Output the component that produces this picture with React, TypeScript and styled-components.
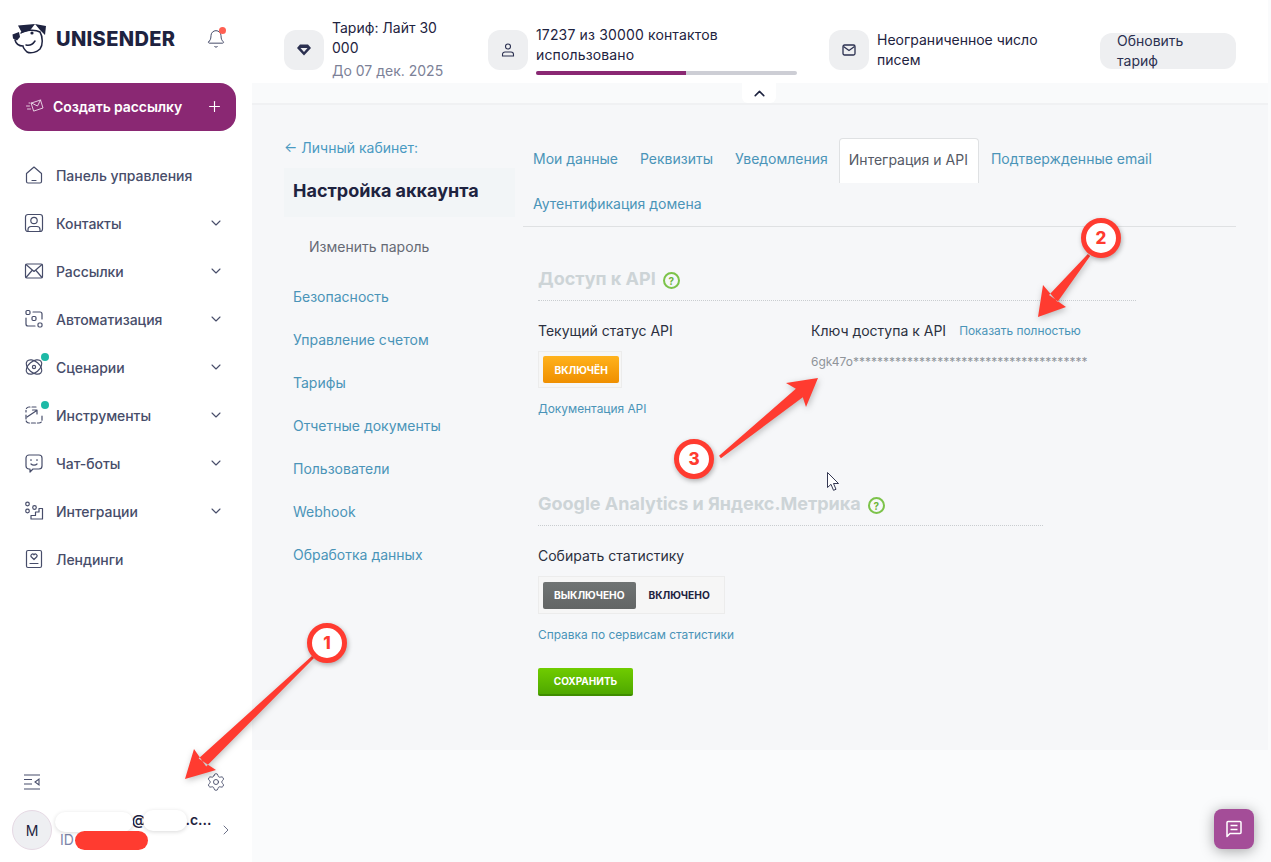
import React from "react";
import styled, { createGlobalStyle } from "styled-components";
import { Bell, ChevronDown, ChevronRight, ChevronUp, Plus, Settings } from "lucide-react";

const GlobalStyle = createGlobalStyle`
  html, body {
    margin: 0;
    padding: 0;
    background: #fff;
    overflow: hidden;
  }
  * {
    box-sizing: border-box;
  }
  body {
    font-family: Inter, "Noto Sans", sans-serif;
    font-size: 14px;
    color: #1e2340;
  }
`;

const Page = styled.div`
  position: relative;
  display: flex;
  width: 100%;
  height: 100vh;
  overflow: hidden;
`;

const Sidebar = styled.aside`
  display: flex;
  flex-direction: column;
  flex: 0 0 252px;
  background: #fff;
`;

const LogoRow = styled.div`
  display: flex;
  align-items: center;
  height: 38px;
  margin: 20px 0 25px;
  padding: 0 26px 0 11px;
`;

const LogoText = styled.span`
  margin-left: 9px;
  font-size: 20px;
  font-weight: 800;
  letter-spacing: 0.35px;
  color: #1e2340;
`;

const BellWrap = styled.div`
  position: relative;
  display: flex;
  margin-left: auto;
  color: #474d6a;

  &::after {
    content: "";
    position: absolute;
    top: -2px;
    right: 0;
    width: 7px;
    height: 7px;
    border-radius: 50%;
    background: #ff5f52;
  }
`;

const CreateButton = styled.button`
  display: flex;
  align-items: center;
  width: 224px;
  height: 48px;
  margin-left: 12px;
  padding: 0 13px 2px 14px;
  border: 0;
  border-radius: 16px;
  background: #8a2873;
  color: #fff;
  font: 600 14px Inter, sans-serif;
  letter-spacing: -0.1px;

  svg:last-child {
    margin-left: auto;
  }
`;

const CreateLabel = styled.span`
  margin-left: 9px;
`;

const Nav = styled.nav`
  display: flex;
  flex-direction: column;
  padding-top: 20px;
`;

const NavItem = styled.a`
  display: flex;
  align-items: center;
  height: 48px;
  padding: 0 28px 0 22px;
  color: #474d6a;
  font-weight: 500;
  letter-spacing: -0.05px;

  > svg:last-child {
    margin-left: auto;
  }
`;

const NavIcon = styled.span<{ $dot?: boolean }>`
  position: relative;
  display: flex;
  width: 24px;
  height: 24px;
  margin-right: 10px;

  &::after {
    content: "";
    display: ${({ $dot }) => ($dot ? "block" : "none")};
    position: absolute;
    top: -2px;
    right: -3px;
    width: 8px;
    height: 8px;
    border-radius: 50%;
    background: #1db9a6;
  }
`;

const SidebarBottom = styled.div`
  margin-top: auto;
  padding-bottom: 12px;
`;

const ToolsRow = styled.div`
  display: flex;
  align-items: center;
  justify-content: space-between;
  height: 24px;
  margin-bottom: 16px;
  padding: 0 26px 0 23px;
  color: #474d6a;
`;

const UserRow = styled.div`
  display: flex;
  align-items: center;
  height: 40px;
  padding: 0 18px 0 12px;
  color: #474d6a;
`;

const Avatar = styled.div`
  display: flex;
  align-items: center;
  justify-content: center;
  flex: 0 0 40px;
  height: 40px;
  border: 1px solid #e6d9e4;
  border-radius: 50%;
  background: #eeeff2;
  color: #1e2340;
`;

const UserInfo = styled.div`
  width: 144px;
  margin: 0 auto 0 8px;
  line-height: 20px;
`;

const UserEmail = styled.div`
  color: #1e2340;
  font-weight: 600;
  white-space: nowrap;
`;

const UserId = styled.div`
  color: #7c86a8;
`;

const Main = styled.main`
  display: flex;
  flex-direction: column;
  flex: 1;
  min-width: 0;
  padding-right: 3px;
  background: #fafbfc;
`;

const TopBar = styled.header`
  display: flex;
  flex: 0 0 83px;
  align-items: flex-start;
  padding: 20px 32px 0;
  background: #fff;
`;

const TopItem = styled.div<{ $width: number }>`
  display: flex;
  align-items: flex-start;
  flex: 0 0 ${({ $width }) => $width}px;
  gap: 8px;
`;

const IconTile = styled.div`
  display: flex;
  align-items: center;
  justify-content: center;
  flex: 0 0 40px;
  height: 40px;
  margin-top: 10px;
  border-radius: 12px;
  background: #eeeff1;
  color: #2b3050;
`;

const TopText = styled.div<{ $width: number; $offset?: number; $spacing?: number }>`
  width: ${({ $width }) => $width}px;
  margin-top: ${({ $offset }) => $offset ?? 0}px;
  line-height: 20px;
  letter-spacing: ${({ $spacing }) => $spacing ?? 0}px;
  color: #1e2340;
`;

const TopMuted = styled.div`
  margin-top: 3px;
  color: #7c8197;
`;

const Progress = styled.div`
  height: 4px;
  margin-top: 6px;
  border-radius: 2px;
  background: #cdced5;
  overflow: hidden;
`;

const ProgressFill = styled.div`
  height: 100%;
  background: #8a2873;
`;

const UpgradeButton = styled.div`
  flex: 0 0 136px;
  height: 36px;
  margin-top: 13px;
  padding: 0 32px 0 17px;
  border-radius: 12px;
  background: #eeeff1;
  color: #2b3050;
  line-height: 20px;
  overflow: hidden;
`;

const UpgradeLabel = styled.div`
  margin-top: -2px;
`;

const Strip = styled.div`
  display: flex;
  flex: 0 0 22px;
  justify-content: flex-start;
  padding-left: 490px;
  border-bottom: 2px solid #f0f1f3;
  background: #f9fafb;
`;

const CollapseTab = styled.div`
  display: flex;
  align-items: center;
  justify-content: center;
  width: 34px;
  height: 20px;
  border-radius: 0 0 6px 6px;
  background: #fff;
  color: #1e2340;
`;

const Content = styled.div`
  display: flex;
  flex: 0 0 645px;
  gap: 8px;
  padding: 33px 32px 0;
  background: #f6f7f9;
`;

const LeftColumn = styled.div`
  flex: 0 0 231px;
`;

const BackLink = styled.a`
  display: block;
  margin: 0 0 10px;
  color: #4a9ac2;
  font-size: 14px;
  line-height: 20px;
`;

const PageTitle = styled.div`
  height: 49px;
  padding-left: 9px;
  background: #f2f5f7;
  color: #1e2340;
  font-size: 18px;
  font-weight: 700;
  line-height: 46px;
`;

const SubItem = styled.div`
  height: 58px;
  padding-left: 25px;
  color: #666a75;
  line-height: 60px;
`;

const SideLink = styled.a`
  display: block;
  height: 43px;
  padding-left: 9px;
  color: #4a94b8;
  line-height: 43px;
`;

const RightColumn = styled.div`
  flex: 1;
  min-width: 0;
`;

const TabBar = styled.div`
  display: flex;
  flex-wrap: wrap;
  align-content: flex-start;
  gap: 0 2px;
  height: 89px;
  border-bottom: 1px solid #dfe1e3;
`;

const Tab = styled.a<{ $active?: boolean }>`
  height: 45px;
  margin-left: ${({ $active }) => ($active ? -1 : 0)}px;
  padding: 0 ${({ $active }) => ($active ? "10px 0 9px" : "10px")};
  border: ${({ $active }) => ($active ? "1px solid #dfe1e3" : "0")};
  border-bottom: 0;
  border-radius: 4px 4px 0 0;
  background: ${({ $active }) => ($active ? "#fff" : "transparent")};
  color: ${({ $active }) => ($active ? "#555a66" : "#4a94b8")};
  line-height: ${({ $active }) => ($active ? 41 : 42)}px;
`;

const Section = styled.section<{ $width: number; $top: number }>`
  width: ${({ $width }) => $width}px;
  margin: ${({ $top }) => $top}px 0 0 15px;
`;

const SectionHead = styled.div`
  display: flex;
  align-items: center;
  gap: 7px;
  height: 37px;
  padding-bottom: 6px;
  border-bottom: 1px dotted #c9cdd0;
`;

const SectionTitle = styled.h2`
  margin: 0;
  color: #cdd4d7;
  font-size: 18px;
  font-weight: 700;
  line-height: 30px;
`;

const HelpMark = styled.span`
  display: flex;
  align-items: center;
  justify-content: center;
  width: 17px;
  height: 17px;
  margin-top: 3px;
  border: 2px solid #7cc34a;
  border-radius: 50%;
  color: #6cb53a;
  font-size: 10px;
  font-weight: 700;
`;

const ApiGrid = styled.div`
  display: grid;
  grid-template-columns: 273px 1fr;
  margin-top: 20px;
`;

const FieldLabel = styled.div`
  color: #2b3040;
  line-height: 20px;
`;

const KeyHead = styled.div`
  display: flex;
  align-items: center;
  gap: 13px;
`;

const SmallLink = styled.a`
  color: #4a94b8;
  font-size: 11.9px;
  line-height: 16px;
`;

const HelpLink = styled(SmallLink)`
  display: block;
  margin-top: 13px;
`;

const ApiKey = styled.div`
  margin-top: 13px;
  color: #8f9499;
  font-size: 12px;
  line-height: 16px;
  white-space: nowrap;
`;

const ToggleBox = styled.div<{ $height: number }>`
  display: inline-flex;
  align-items: center;
  height: ${({ $height }) => $height}px;
  margin-top: 10px;
  padding: 0 2px 0 4px;
  border: 1px solid #ececec;
  background: #f6f6f6;
  vertical-align: top;
`;

const ToggleOption = styled.span<{ $tone?: "orange" | "grey" }>`
  display: flex;
  align-items: center;
  justify-content: center;
  height: 27px;
  padding: ${({ $tone }) => ($tone === "grey" ? "0 11px" : $tone === "orange" ? "0 11.5px" : "0 12px 0 13px")};
  border-radius: 2px;
  background: ${({ $tone }) =>
    $tone === "orange"
      ? "linear-gradient(#ffb21c, #ef8f00)"
      : $tone === "grey"
        ? "linear-gradient(#707474, #626565)"
        : "transparent"};
  color: ${({ $tone }) => ($tone ? "#fff" : "#1e2340")};
  font-size: 10.2px;
  font-weight: 700;
`;

const ToggleRow = styled.div`
  line-height: 0;
`;

const SaveButton = styled.button`
  display: block;
  width: 95px;
  height: 28px;
  margin-top: 25px;
  padding: 0;
  border: 0;
  border-bottom: 2px solid #3f8c00;
  border-radius: 2px;
  background: linear-gradient(#70cc00, #4fa800);
  color: #fff;
  font: 700 10px Inter, sans-serif;
`;

const ChatButton = styled.div`
  position: absolute;
  top: 809px;
  left: 1214px;
  display: flex;
  align-items: center;
  justify-content: center;
  width: 40px;
  height: 40px;
  border-radius: 8px;
  background: #a44d98;
  box-shadow: 0 2px 14px rgba(0, 0, 0, 0.35);
  color: #fff;
`;

const Overlay = styled.svg`
  position: absolute;
  top: 0;
  left: 0;
  filter: drop-shadow(1px 2px 3px rgba(0, 0, 0, 0.25));
  pointer-events: none;
`;

const Marker = styled.div<{ $x: number; $y: number }>`
  position: absolute;
  top: ${({ $y }) => $y - 20}px;
  left: ${({ $x }) => $x - 20}px;
  display: flex;
  align-items: center;
  justify-content: center;
  width: 40px;
  height: 40px;
  border: 5px solid #ff3b30;
  border-radius: 50%;
  background: #fff;
  box-shadow: 1px 2px 5px rgba(0, 0, 0, 0.3);
  color: #ff3b30;
  font-size: 17px;
  font-weight: 800;
`;

const Redaction = styled.div<{ $x: number; $y: number; $w: number; $h: number; $red?: boolean }>`
  position: absolute;
  top: ${({ $y }) => $y}px;
  left: ${({ $x }) => $x}px;
  width: ${({ $w }) => $w}px;
  height: ${({ $h }) => $h}px;
  border-radius: 10px;
  background: ${({ $red }) => ($red ? "#ff3b30" : "#fff")};
  box-shadow: ${({ $red }) => ($red ? "none" : "0 1px 4px rgba(0, 0, 0, 0.15)")};
`;

const Cursor = styled.svg`
  position: absolute;
  top: 472px;
  left: 827px;
`;

type NavEntry = { label: string; icon: React.ReactNode; chevron?: boolean; dot?: boolean };

const Glyph: React.FC<{ children: React.ReactNode; size?: number }> = ({ children, size = 24 }) => (
  <svg width={size} height={size} viewBox="0 0 24 24" fill="none" stroke="currentColor" strokeWidth="1.2" strokeLinecap="round" strokeLinejoin="round">
    {children}
  </svg>
);

const navEntries: NavEntry[] = [
  {
    label: "Панель управления",
    icon: (
      <Glyph>
        <path d="M4.500 10.500 12 4l7.500 6.500v8a1.500 1.500 0 0 1-1.500 1.500H6a1.500 1.500 0 0 1-1.500-1.500z" />
        <path d="M10 17.500h4" />
      </Glyph>
    ),
  },
  {
    label: "Контакты",
    chevron: true,
    icon: (
      <Glyph>
        <rect x="3.500" y="3.500" width="17" height="17" rx="2.500" />
        <circle cx="12" cy="9.500" r="3.200" />
        <path d="M6 20.500v-2a3 3 0 0 1 3-3h6a3 3 0 0 1 3 3v2" />
      </Glyph>
    ),
  },
  {
    label: "Рассылки",
    chevron: true,
    icon: (
      <Glyph>
        <rect x="3.500" y="5" width="17" height="14" rx="1.500" />
        <path d="m4 5.500 8 7 8-7M4 18.500l6-7M20 18.500l-6-7" />
      </Glyph>
    ),
  },
  {
    label: "Автоматизация",
    chevron: true,
    icon: (
      <Glyph>
        <rect x="4" y="3.500" width="4" height="4" rx="1.200" />
        <rect x="10" y="9.500" width="4" height="4" rx="1.200" />
        <rect x="16" y="16" width="4" height="4" rx="1.200" />
        <path d="M11 5h7a2 2 0 0 1 2 2v5M4 11v6a2 2 0 0 0 2 2h7" />
      </Glyph>
    ),
  },
  {
    label: "Сценарии",
    chevron: true,
    dot: true,
    icon: (
      <Glyph>
        <circle cx="12" cy="12" r="1.600" />
        <ellipse cx="12" cy="12" rx="9" ry="5.500" transform="rotate(40 12 12)" />
        <ellipse cx="12" cy="12" rx="9" ry="5.500" transform="rotate(-40 12 12)" />
      </Glyph>
    ),
  },
  {
    label: "Инструменты",
    chevron: true,
    dot: true,
    icon: (
      <Glyph>
        <path d="M14 4H7a3 3 0 0 0-3 3v2M4 12v5a3 3 0 0 0 3 3h10a3 3 0 0 0 3-3v-5" strokeDasharray="4 2" />
        <path d="m5 14 9-6M10.500 7H15v4" />
      </Glyph>
    ),
  },
  {
    label: "Чат-боты",
    chevron: true,
    icon: (
      <Glyph>
        <path d="M7 4h10a3 3 0 0 1 3 3v8a3 3 0 0 1-3 3h-6l-3 3v-3H7a3 3 0 0 1-3-3V7a3 3 0 0 1 3-3z" />
        <path d="M9 13c1.500 1.500 4.500 1.500 6 0M9 8.500v1M15 8.500v1" />
      </Glyph>
    ),
  },
  {
    label: "Интеграции",
    chevron: true,
    icon: (
      <Glyph>
        <circle cx="5.500" cy="5" r="1.800" />
        <circle cx="5.500" cy="12" r="1.800" />
        <circle cx="12.500" cy="8.500" r="1.800" />
        <path d="M9 20v-3.500h4.500V13H17V9.500h3.500V20z" />
      </Glyph>
    ),
  },
  {
    label: "Лендинги",
    icon: (
      <Glyph>
        <rect x="4.500" y="3.500" width="15" height="17" rx="1.500" />
        <path d="M12 12.500 9.200 9.800a1.700 1.700 0 0 1 2.800-2 1.700 1.700 0 0 1 2.800 2zM8 16.500h8" />
      </Glyph>
    ),
  },
];

const sideLinks = ["Безопасность", "Управление счетом", "Тарифы", "Отчетные документы", "Пользователи", "Webhook", "Обработка данных"];

const tabs = ["Мои данные", "Реквизиты", "Уведомления", "Интеграция и API", "Подтвержденные email", "Аутентификация домена"];

type Point = [number, number];

// Tapered callout arrow, from a thin tail out to a notched head
const arrowPoints = (tail: Point, tip: Point, c1: Point, c2: Point) => {
  const dx = tip[0] - tail[0];
  const dy = tip[1] - tail[1];
  const len = Math.hypot(dx, dy);
  const nx = -dy / len;
  const ny = dx / len;
  const neck = (k: number, w: number): Point => {
    const bx = tail[0] + dx * k;
    const by = tail[1] + dy * k;
    return [bx + nx * w, by + ny * w];
  };
  const k = 1 - 24 / len;
  const pts: Point[] = [neck(0, 1.5), neck(k, 5.5), c2, tip, c1, neck(k, -5.5), neck(0, -1.5)];
  return pts.map((p) => p.join(",")).join(" ");
};

const LogoMark = () => (
  <svg width="36" height="32" viewBox="0 0 36 32" fill="none">
    <path d="M7 2.500 24 1l-5 6.500-8 2.500z" fill="#1e2340" />
    <path d="M24 1l11 2-1 9-5-5z" fill="#1e2340" />
    <path d="M10 10c4-3 14-4 19-1 3 5 3 13 0 17-3 3-9 5-13 3-2-2-4-4-4-6-4 0-7-2-8-6" stroke="#1e2340" strokeWidth="1.500" strokeLinecap="round" />
    <path d="M1.500 11.500 8 9l1 5-3 3.500-4-2z" fill="#1e2340" />
    <path d="M15 22c4 1 7-1 9-4" stroke="#1e2340" strokeWidth="1.500" strokeLinecap="round" />
    <circle cx="21" cy="10" r="1.600" fill="#1e2340" />
  </svg>
);

const App: React.FC = () => (
  <Page>
    <GlobalStyle />
    <Sidebar>
      <LogoRow>
        <LogoMark />
        <LogoText>UNISENDER</LogoText>
        <BellWrap>
          <Bell size={20} strokeWidth={1.2} />
        </BellWrap>
      </LogoRow>
      <CreateButton>
        <svg width="18" height="16" viewBox="0 0 18 16" fill="none" stroke="#fff" strokeWidth="0.9" strokeLinecap="round" strokeLinejoin="round" opacity="0.85">
          <path d="m5.500 5 9-3 2.500 8-9 3z" />
          <path d="m5.500 5 6 3 3-6" />
          <path d="M0.500 8h3M1.500 11h3M3 5h1" />
        </svg>
        <CreateLabel>Создать рассылку</CreateLabel>
        <Plus size={17} strokeWidth={1.6} />
      </CreateButton>
      <Nav>
        {navEntries.map((entry) => (
          <NavItem key={entry.label}>
            <NavIcon $dot={entry.dot}>{entry.icon}</NavIcon>
            {entry.label}
            {entry.chevron && <ChevronDown size={16} strokeWidth={1.6} />}
          </NavItem>
        ))}
      </Nav>
      <SidebarBottom>
        <ToolsRow>
          <svg width="18" height="16" viewBox="0 0 18 16" fill="none" stroke="currentColor" strokeWidth="1.1">
            <path d="M1 1h16M1 5.500h8M1 10h8M1 15h16" />
            <path d="M16 5v6l-4-3z" />
          </svg>
          <Settings size={20} strokeWidth={1.1} />
        </ToolsRow>
        <UserRow>
          <Avatar>M</Avatar>
          <UserInfo>
            <UserEmail>xxxxxxxxx@xxxxx.c...</UserEmail>
            <UserId>ID</UserId>
          </UserInfo>
          <ChevronRight size={16} strokeWidth={1.2} />
        </UserRow>
      </SidebarBottom>
    </Sidebar>

    <Main>
      <TopBar>
        <TopItem $width={204}>
          <IconTile>
            <svg width="14" height="12" viewBox="0 0 14 12" fill="currentColor">
              <path d="M3 0.500h8L14 4l-7 7.500L0 4zM3.500 4 7 8l3.500-4z" fillRule="evenodd" />
            </svg>
          </IconTile>
          <TopText $width={120} $offset={-2}>
            Тариф: Лайт 30 000
            <TopMuted>До 07 дек. 2025</TopMuted>
          </TopText>
        </TopItem>
        <TopItem $width={341}>
          <IconTile>
            <svg width="14" height="14" viewBox="0 0 14 14" fill="none" stroke="currentColor" strokeWidth="1.100">
              <circle cx="7" cy="3.500" r="2.500" />
              <path d="M1.500 13v-1.500a2.500 2.500 0 0 1 2.500-2.500h6a2.500 2.500 0 0 1 2.500 2.500V13z" />
            </svg>
          </IconTile>
          <TopText $width={261} $offset={5} $spacing={0.15}>
            17237 из 30000 контактов использовано
            <Progress>
              <ProgressFill style={{ width: `${(17237 / 30000) * 100}%` }} />
            </Progress>
          </TopText>
        </TopItem>
        <TopItem $width={271}>
          <IconTile>
            <svg width="14" height="12" viewBox="0 0 14 12" fill="none" stroke="currentColor" strokeWidth="1.300">
              <rect x="1" y="1" width="12" height="10" rx="1.500" />
              <path d="m1.500 2.500 5.500 4 5.500-4" />
            </svg>
          </IconTile>
          <TopText $width={180} $offset={10}>
            Неограниченное число писем
          </TopText>
        </TopItem>
        <UpgradeButton>
          <UpgradeLabel>Обновить тариф</UpgradeLabel>
        </UpgradeButton>
      </TopBar>
      <Strip>
        <CollapseTab>
          <ChevronUp size={17} strokeWidth={2.2} />
        </CollapseTab>
      </Strip>
      <Content>
        <LeftColumn>
          <BackLink>← Личный кабинет:</BackLink>
          <PageTitle>Настройка аккаунта</PageTitle>
          <SubItem>Изменить пароль</SubItem>
          {sideLinks.map((link) => (
            <SideLink key={link}>{link}</SideLink>
          ))}
        </LeftColumn>
        <RightColumn>
          <TabBar>
            {tabs.map((tab) => (
              <Tab key={tab} $active={tab === "Интеграция и API"}>
                {tab}
              </Tab>
            ))}
          </TabBar>
          <Section $width={598} $top={37}>
            <SectionHead>
              <SectionTitle>Доступ к API</SectionTitle>
              <HelpMark>?</HelpMark>
            </SectionHead>
            <ApiGrid>
              <div>
                <FieldLabel>Текущий статус API</FieldLabel>
                <ToggleBox $height={37}>
                  <ToggleOption $tone="orange">ВКЛЮЧЁН</ToggleOption>
                </ToggleBox>
                <HelpLink>Документация API</HelpLink>
              </div>
              <div>
                <KeyHead>
                  <FieldLabel>Ключ доступа к API</FieldLabel>
                  <SmallLink>Показать полностью</SmallLink>
                </KeyHead>
                <ApiKey>6gk47o***************************************</ApiKey>
              </div>
            </ApiGrid>
          </Section>
          <Section $width={505} $top={72}>
            <SectionHead>
              <SectionTitle>Google Analytics и Яндекс.Метрика</SectionTitle>
              <HelpMark>?</HelpMark>
            </SectionHead>
            <ApiGrid>
              <div>
                <FieldLabel>Собирать статистику</FieldLabel>
                <ToggleRow>
                  <ToggleBox $height={38}>
                    <ToggleOption $tone="grey">ВЫКЛЮЧЕНО</ToggleOption>
                    <ToggleOption>ВКЛЮЧЕНО</ToggleOption>
                  </ToggleBox>
                </ToggleRow>
                <HelpLink>Справка по сервисам статистики</HelpLink>
                <SaveButton>СОХРАНИТЬ</SaveButton>
              </div>
            </ApiGrid>
          </Section>
        </RightColumn>
      </Content>
    </Main>

    <ChatButton>
      <svg width="20" height="20" viewBox="0 0 20 20" fill="none" stroke="currentColor" strokeWidth="1.500" strokeLinejoin="round">
        <path d="M3 3.500a1 1 0 0 1 1-1h12a1 1 0 0 1 1 1v10a1 1 0 0 1-1 1H6l-3 3z" />
        <path d="M6.500 6.500h7M6.500 10.500h7" />
      </svg>
    </ChatButton>

    <Overlay width="1271" height="862" viewBox="0 0 1271 862">
      <polygon points={arrowPoints([313, 657], [185, 779], [194, 749], [216, 770])} fill="#ff3b30" />
      <polygon points={arrowPoints([1089, 255], [1038, 317], [1043, 285], [1066, 307])} fill="#ff3b30" />
      <polygon points={arrowPoints([720, 457], [818, 378], [786, 383], [806, 407])} fill="#ff3b30" />
    </Overlay>
    <Marker $x={327} $y={643}>1</Marker>
    <Marker $x={1101} $y={238}>2</Marker>
    <Marker $x={694} $y={459}>3</Marker>
    <Redaction $x={55} $y={812} $w={78} $h={20} />
    <Redaction $x={143} $y={810} $w={44} $h={21} />
    <Redaction $x={75} $y={831} $w={73} $h={19} $red />
    <Cursor width="13" height="20" viewBox="0 0 13 20">
      <path d="M0.500 0.500v15l3.500-3.200 2.500 6 2.500-1-2.500-5.800h5z" fill="#fff" stroke="#1e2340" strokeWidth="0.900" strokeLinejoin="round" />
    </Cursor>
  </Page>
);

export default App;
